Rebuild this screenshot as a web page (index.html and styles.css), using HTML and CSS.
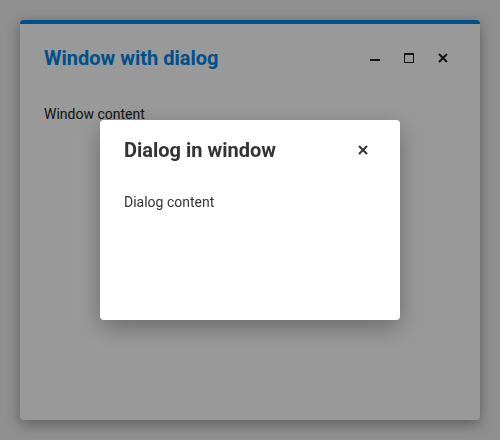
FILE: index.html
```html
<!DOCTYPE html>
<html>
<head>
<meta charset="utf-8">
<link rel="stylesheet" href="styles.css">
</head>
<body>
<div class="window">
  <div class="win-header">
    <h1 class="win-title">Window with dialog</h1>
    <div class="win-controls">
      <button class="ctl" aria-label="Minimize"><svg width="10" height="10" viewBox="0 0 10 10"><rect x="0" y="6" width="10" height="2" fill="#222"/></svg></button>
      <button class="ctl" aria-label="Maximize"><svg width="10" height="10" viewBox="0 0 10 10"><rect x="0.5" y="0.5" width="9" height="9" fill="none" stroke="#222" stroke-width="1"/><rect x="0" y="0" width="10" height="2" fill="#222"/></svg></button>
      <button class="ctl" aria-label="Close"><svg width="10" height="10" viewBox="0 0 10 10"><path d="M1 1L9 9M9 1L1 9" stroke="#222" stroke-width="2"/></svg></button>
    </div>
  </div>
  <div class="win-body">Window content</div>
</div>
<div class="overlay">
  <div class="dialog">
    <div class="dlg-header">
      <h2 class="dlg-title">Dialog in window</h2>
      <button class="dlg-close" aria-label="Close"><svg width="10" height="10" viewBox="0 0 10 10"><path d="M1 1L9 9M9 1L1 9" stroke="#333" stroke-width="2"/></svg></button>
    </div>
    <div class="dlg-body">Dialog content</div>
  </div>
</div>
</body>
</html>
```
FILE: styles.css
```css
* { box-sizing: border-box; }
html, body { margin: 0; height: 100%; }
body {
  background: #eeeeee;
  padding: 20px;
  font-family: Roboto, "Liberation Sans", sans-serif;
  color: #222;
}
.window {
  height: 400px;
  background: #fff;
  border-top: 4px solid #0085e8;
  border-radius: 4px;
  box-shadow: 0 4px 14px rgba(0,0,0,0.35);
  display: flex;
  flex-direction: column;
}
.win-header {
  display: flex;
  align-items: center;
  justify-content: space-between;
  padding: 24px 20px 0 24px;
}
.win-title {
  margin: 0;
  font-size: 20px;
  line-height: 20px;
  font-weight: 700;
  color: #0085e8;
}
.win-controls { display: flex; }
.ctl {
  width: 34px;
  height: 20px;
  border: 0;
  padding: 0;
  background: none;
  display: flex;
  align-items: center;
  justify-content: center;
}
.ctl svg { display: block; }
.win-body {
  padding: 36px 24px 0;
  font-size: 14px;
  line-height: 20px;
}
.overlay {
  position: fixed;
  inset: 0;
  background: rgba(0,0,0,0.4);
  display: flex;
  align-items: center;
  justify-content: center;
}
.dialog {
  width: 300px;
  height: 200px;
  background: #fff;
  border-radius: 4px;
  box-shadow: 0 8px 24px rgba(0,0,0,0.3);
  padding: 20px 27px 20px 24px;
  color: #333;
}
.dlg-header {
  display: flex;
  align-items: center;
  justify-content: space-between;
}
.dlg-title {
  margin: 0;
  font-size: 20px;
  line-height: 20px;
  font-weight: 700;
}
.dlg-close {
  width: 20px;
  height: 20px;
  border: 0;
  padding: 0;
  background: none;
  display: flex;
  align-items: center;
  justify-content: center;
}
.dlg-close svg { display: block; }
.dlg-body {
  margin-top: 32px;
  font-size: 14px;
  line-height: 20px;
}
```
